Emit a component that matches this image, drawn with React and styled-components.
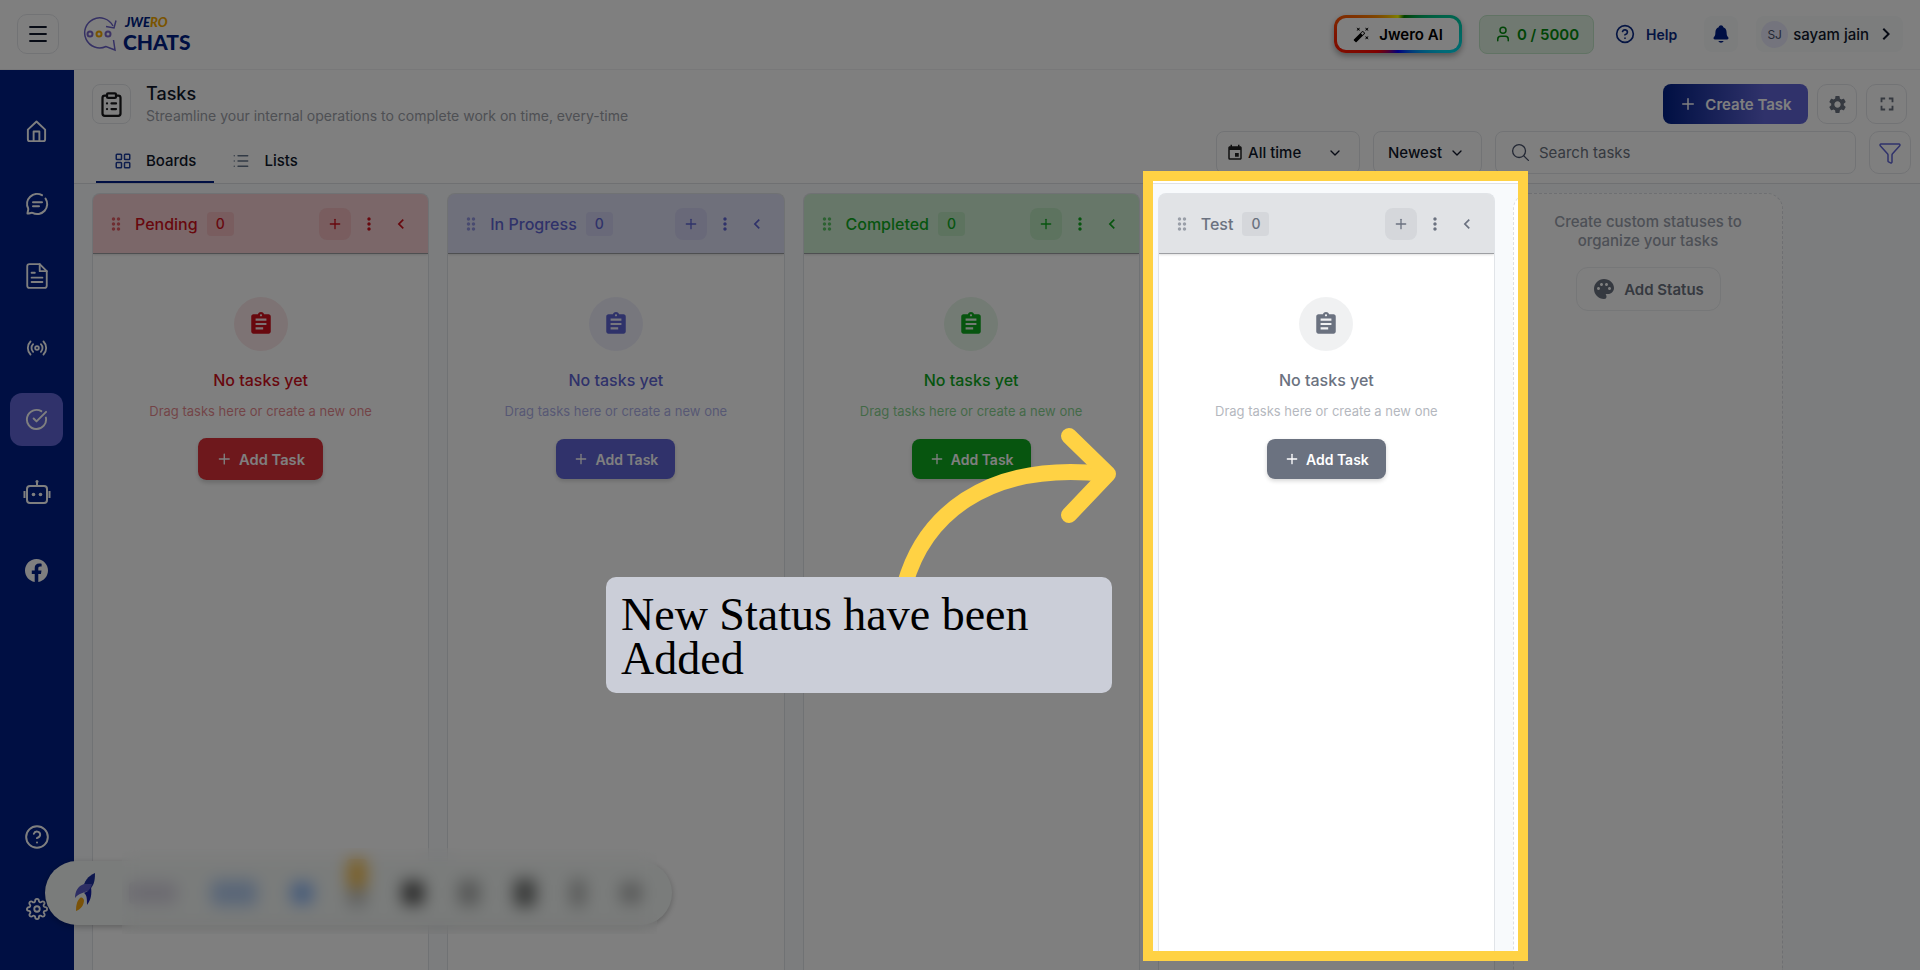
import React from "react";
import styled, { createGlobalStyle } from "styled-components";
import {
  Menu,
  Radio,
  CircleCheckBig,
  CircleHelp,
  ClipboardList,
  LayoutGrid,
  List,
  Plus,
  User,
  ChevronDown,
  Funnel,
} from "lucide-react";
import {
  MdAssignment,
  MdAutoFixHigh,
  MdChevronLeft,
  MdChevronRight,
  MdDragIndicator,
  MdEvent,
  MdFullscreen,
  MdMoreVert,
  MdPalette,
  MdSettings,
} from "react-icons/md";
import { IoNotifications, IoSearchOutline } from "react-icons/io5";
import { BsFacebook } from "react-icons/bs";
import { FiSettings } from "react-icons/fi";

const GlobalStyle = createGlobalStyle`
  * {
    box-sizing: border-box;
  }
  body {
    margin: 0;
    font-family: Inter, "Liberation Sans", sans-serif;
    color: #0f172a;
  }
  button, input, select {
    font-family: inherit;
    color: inherit;
    margin: 0;
  }
  button {
    cursor: pointer;
    padding: 0;
    border: none;
    background: none;
  }
  svg {
    flex-shrink: 0;
  }
`;

const Page = styled.div`
  position: relative;
  display: flex;
  flex-direction: column;
  height: 100vh;
  overflow: hidden;
  background: white;
`;

/* top bar */
const TopBar = styled.header`
  display: flex;
  align-items: center;
  justify-content: space-between;
  height: 70px;
  padding: 0 17px 1px;
  border-bottom: 1px solid #f0f0f2;
`;
const TopGroup = styled.div`
  display: flex;
  align-items: center;
  gap: ${(props) => props.$gap || 0}px;
`;
const IconBox = styled.button`
  display: flex;
  align-items: center;
  justify-content: center;
  width: ${(props) => props.$width || 40}px;
  height: ${(props) => props.$height || 40}px;
  border: 1px solid #e5e7eb;
  border-radius: 10px;
  color: ${(props) => props.$color || "#0f172a"};
`;
const Logo = styled.a`
  display: flex;
  align-items: center;
  gap: 6px;
  color: #001f86;
  text-decoration: none;
  font-family: Lato, sans-serif;
  font-weight: 900;
`;
const LogoText = styled.div`
  display: flex;
  flex-direction: column;
  gap: 2px;
`;
const LogoSmall = styled.span`
  display: flex;
  padding-left: 2px;
  font-size: 13px;
  line-height: 13px;
  font-style: italic;
  em {
    color: #f5a800;
  }
`;
const LogoBig = styled.span`
  font-size: 21px;
  line-height: 21px;
`;
const AiButton = styled.button`
  display: flex;
  align-items: center;
  justify-content: center;
  gap: 9px;
  width: 128px;
  height: 38px;
  margin-right: 17px;
  border: 3px solid transparent;
  border-radius: 12px;
  background: linear-gradient(white, white) padding-box,
    conic-gradient(#ff8c00, yellow 0deg, green 20deg, #00c896 70deg, #00d8f0 110deg, blue 180deg, red 230deg, #ff2a00 270deg, #ff7a00 300deg, yellow 360deg) border-box;
  box-shadow: 0 3px 6px rgba(0, 0, 0, 0.35);
  color: black;
  font-size: 15px;
  font-weight: 600;
`;
const Quota = styled.div`
  display: flex;
  align-items: center;
  justify-content: center;
  gap: 5px;
  width: 115px;
  height: 39px;
  margin-right: 21px;
  border: 1px solid #c3e6c8;
  border-radius: 8px;
  background: #e0f2e2;
  color: #008a0c;
  font-size: 15px;
  font-weight: 600;
`;
const HelpLink = styled.a`
  display: flex;
  align-items: center;
  gap: 11px;
  margin-right: 27px;
  color: #0b2a86;
  text-decoration: none;
  font-size: 14px;
  font-weight: 600;
`;
const SoftButton = styled.button`
  display: flex;
  align-items: center;
  justify-content: center;
  gap: 5px;
  height: 36px;
  padding: 0 ${(props) => props.$pad}px;
  border-radius: 8px;
  background: #f8fafb;
  font-size: 15px;
  font-weight: 500;
`;
const Avatar = styled.span`
  display: flex;
  align-items: center;
  justify-content: center;
  width: 27px;
  height: 27px;
  border-radius: 50%;
  background: #e8e8fb;
  color: #475069;
  font-size: 12px;
  font-weight: 400;
`;

/* side bar */
const Body = styled.div`
  display: flex;
  flex: 1;
  min-height: 0;
`;
const SideBar = styled.nav`
  display: flex;
  flex-direction: column;
  align-items: flex-start;
  width: 74px;
  padding: 35px 10px;
  background: #001f86;
`;
const SideGroup = styled.div`
  display: flex;
  flex-direction: column;
  gap: 19px;
  margin-bottom: ${(props) => (props.$last ? 0 : 26)}px;
  margin-top: ${(props) => (props.$last ? "auto" : 0)};
`;
const SideLink = styled.a`
  display: flex;
  align-items: center;
  justify-content: center;
  width: 53px;
  height: 53px;
  border-radius: 12px;
  color: white;
  background: ${(props) => (props.$active ? "#6065d6" : "transparent")};
`;

/* page head */
const Main = styled.main`
  display: flex;
  flex-direction: column;
  flex: 1;
  min-width: 0;
`;
const PageHead = styled.div`
  display: flex;
  justify-content: space-between;
  height: 114px;
  padding: 14px 9px 0 18px;
  border-bottom: 1px solid #dfe1e5;
`;
const HeadLeft = styled.div`
  display: flex;
  flex-direction: column;
  justify-content: space-between;
`;
const TitleRow = styled.div`
  display: flex;
  gap: 15px;
  h1 {
    margin: 0;
    font-size: 18px;
    line-height: 20px;
    font-weight: 500;
  }
  p {
    margin: 0;
    font-size: 14px;
    line-height: 24px;
    color: #9ca0a8;
  }
`;
const TitleIcon = styled.div`
  display: flex;
  align-items: center;
  justify-content: center;
  width: 39px;
  height: 40px;
  border: 1px solid #e5e7eb;
  border-radius: 8px;
  color: #18181b;
`;
const Tabs = styled.div`
  display: flex;
  padding-left: 4px;
`;
const Tab = styled.button`
  display: flex;
  align-items: center;
  gap: 14px;
  height: 43px;
  padding: 0 18px;
  border-bottom: 2px solid ${(props) => (props.$active ? "#001f86" : "transparent")};
  font-size: 15px;
  font-weight: 500;
  svg {
    color: ${(props) => (props.$active ? "#1c3c9c" : "#64748b")};
  }
`;
const HeadRight = styled.div`
  display: flex;
  flex-direction: column;
  gap: 7px;
`;
const Actions = styled.div`
  display: flex;
  justify-content: flex-end;
  gap: 9px;
  padding-right: 4px;
`;
const CreateButton = styled.button`
  display: flex;
  align-items: center;
  justify-content: center;
  gap: 8px;
  width: 145px;
  height: 40px;
  border-radius: 8px;
  background: linear-gradient(90deg, #001f86, #6065d6 70%);
  color: white;
  font-size: 15px;
  font-weight: 600;
`;
const Filters = styled.div`
  display: flex;
  gap: 13px;
`;
const Field = styled.label`
  display: flex;
  align-items: center;
  gap: ${(props) => props.$gap || 4}px;
  width: ${(props) => props.$width}px;
  height: 43px;
  padding: 0 ${(props) => props.$right || 16}px 0 ${(props) => props.$left || 14}px;
  border: 1px solid #e5e7eb;
  border-radius: 8px;
  font-size: 15px;
  select {
    flex: 1;
    min-width: 0;
    appearance: none;
    border: none;
    background: none;
    padding: 0;
    font-size: 15px;
    font-weight: 500;
  }
  input {
    flex: 1;
    min-width: 0;
    border: none;
    background: none;
    padding: 0;
    font-size: 15px;
  }
  input::placeholder {
    color: #6b7280;
    opacity: 1;
  }
`;

/* board */
const Board = styled.section`
  display: grid;
  grid-template-columns: repeat(4, 1fr) 270px;
  gap: 18px;
  flex: 1;
  min-height: 0;
  padding: 9px 137px 0 18px;
  background: #f8fafc;
`;
const Column = styled.article`
  display: flex;
  flex-direction: column;
  border: 1px solid #e1e4e8;
  border-bottom: none;
  border-radius: 8px 8px 0 0;
  overflow: hidden;
  background: white;
  color: ${(props) => props.$color};
`;
const ColumnHead = styled.div`
  display: flex;
  align-items: center;
  height: 60px;
  padding: 0 13px;
  border-bottom: 1px solid #9d9fa3;
  background: ${(props) => props.$color}33;
  box-shadow: 0 1px 2px rgba(0, 0, 0, 0.12);
  h2 {
    margin: 0 9px;
    font-size: 16px;
    font-weight: 500;
  }
`;
const Handle = styled.span`
  display: flex;
  opacity: 0.6;
`;
const Count = styled.span`
  width: 27px;
  height: 24px;
  border-radius: 4px;
  background: ${(props) => props.$color}1a;
  text-align: center;
  font-size: 14px;
  line-height: 24px;
  font-weight: 500;
`;
const HeadButtons = styled.div`
  display: flex;
  align-items: center;
  gap: 4px;
  margin-left: auto;
`;
const HeadButton = styled.button`
  display: flex;
  align-items: center;
  justify-content: center;
  width: ${(props) => (props.$tint ? 32 : 28)}px;
  height: 32px;
  border-radius: 8px;
  color: inherit;
  background: ${(props) => (props.$tint ? props.$tint + "1a" : "none")};
`;
const Empty = styled.div`
  display: flex;
  flex-direction: column;
  align-items: center;
  padding-top: 43px;
  h3 {
    margin: 18px 0 0;
    font-size: 16px;
    line-height: 22px;
    font-weight: 500;
  }
  p {
    margin: 10px 0 18px;
    font-size: 13px;
    line-height: 20px;
    opacity: 0.5;
  }
`;
const Circle = styled.div`
  display: flex;
  align-items: center;
  justify-content: center;
  width: 54px;
  height: 54px;
  border-radius: 50%;
  background: ${(props) => props.$color}1a;
`;
const AddTask = styled.button`
  display: flex;
  align-items: center;
  justify-content: center;
  gap: 6px;
  width: 119px;
  height: 40px;
  border-radius: 8px;
  background: ${(props) => props.$color};
  box-shadow: 0 2px 4px rgba(0, 0, 0, 0.16);
  color: white;
  font-size: 14px;
  font-weight: 600;
  transform: ${(props) => (props.$hovered ? "scale(1.05)" : "none")};
`;
const NewStatus = styled.aside`
  display: flex;
  flex-direction: column;
  align-items: center;
  padding-top: 18px;
  border: 1px dashed #dcdfe4;
  border-bottom: none;
  border-radius: 16px 16px 0 0;
  background: white;
  p {
    width: 200px;
    margin: 0 0 17px;
    text-align: center;
    font-size: 15px;
    line-height: 19px;
    font-weight: 500;
    color: #9aa0ac;
  }
`;
const AddStatus = styled.button`
  display: flex;
  align-items: center;
  justify-content: center;
  gap: 8px;
  width: 145px;
  height: 44px;
  border: 1px solid #eceef0;
  border-radius: 12px;
  color: #6b7280;
  font-size: 15px;
  font-weight: 600;
`;

/* floating dock, its tools are blurred out */
const Dock = styled.div`
  position: absolute;
  left: 45px;
  bottom: 45px;
  display: flex;
  align-items: center;
  width: 627px;
  height: 64px;
  padding-left: 22px;
  border-radius: 32px;
  background: #f5f9f7;
  box-shadow: 0 2px 6px rgba(0, 0, 0, 0.25);
`;
const Tools = styled.div`
  display: flex;
  align-items: center;
  justify-content: space-between;
  flex: 1;
  padding: 0 30px;
`;
const Tool = styled.span`
  width: ${(props) => props.$width || 22}px;
  height: ${(props) => props.$height || 22}px;
  margin-bottom: ${(props) => props.$raise || 0}px;
  border-radius: 4px;
  background: ${(props) => props.$color};
`;
const Haze = styled.div`
  position: absolute;
  left: 122px;
  bottom: 36px;
  width: 535px;
  height: 86px;
  backdrop-filter: blur(8px);
`;

/* walkthrough layer */
const Spotlight = styled.div`
  position: absolute;
  top: 171px;
  left: 1143px;
  bottom: 9px;
  width: 385px;
  border: 10px solid #ffd244;
  box-shadow: 0 0 0 2000px rgba(0, 0, 0, 0.5);
  pointer-events: none;
`;
const Arrow = styled.svg`
  position: absolute;
  top: 420px;
  left: 890px;
  pointer-events: none;
`;
const Note = styled.div`
  position: absolute;
  top: 577px;
  left: 606px;
  width: 506px;
  padding: 16px 15px 12px;
  border-radius: 10px;
  background: #cbced8;
  color: black;
  font-family: "Liberation Serif", serif;
  font-size: 46px;
  line-height: 44px;
`;

const Icon = ({ size = 24, width = 2, children }) => (
  <svg
    width={size}
    height={size}
    viewBox="0 0 24 24"
    fill="none"
    stroke="currentColor"
    strokeWidth={width}
    strokeLinecap="round"
    strokeLinejoin="round"
  >
    {children}
  </svg>
);
const HomeIcon = () => (
  <Icon size={23}>
    <path d="M3 10 12 1.500 21 10V20a2 2 0 0 1-2 2H5a2 2 0 0 1-2-2z" />
    <path d="M9 22V12h6v10" />
  </Icon>
);
const ChatIcon = () => (
  <Icon>
    <path d="M17 3.200A10 10 0 0 0 3.200 16.500C3.600 17.500 2.500 20 2.500 21.500 4 21.800 6 20.500 7.500 20.900A10 10 0 0 0 20.500 6.500" />
    <path d="M8 10.300h9M8 14.300h6" />
  </Icon>
);
const DocIcon = () => (
  <Icon size={26} width={1.7}>
    <path d="M14.500 1H5a2 2 0 0 0-2 2v18a2 2 0 0 0 2 2h14a2 2 0 0 0 2-2V7.500z" />
    <path d="M14.500 1v6.500H21M7 9h3M7 13.500h10M7 17.500h10" />
  </Icon>
);
const BotIcon = () => (
  <svg width="28" height="26" viewBox="0 0 28 26" fill="none" stroke="currentColor" strokeWidth="2">
    <rect x="4" y="7" width="20" height="17" rx="3" />
    <path d="M14 7V3M1.500 12v7M26.500 12v7" />
    <circle cx="14" cy="2.500" r="1.500" fill="currentColor" stroke="none" />
    <circle cx="10.500" cy="15.500" r="1.800" fill="currentColor" stroke="none" />
    <circle cx="17.500" cy="15.500" r="1.800" fill="currentColor" stroke="none" />
  </svg>
);
const LogoMark = () => (
  <svg width="34" height="36" viewBox="0 0 34 36" fill="none" strokeWidth="1.500" stroke="#6b62c8">
    <path d="M30 10A15 15 0 1 0 23 30.500L32 34 30.500 24" />
    <path d="M23 10.500 31 12 33 4.500" />
    <circle cx="7" cy="18" r="2.500" strokeWidth="2" stroke="#7b68c8" />
    <circle cx="16" cy="18" r="2.500" strokeWidth="2" stroke="#f5a800" />
    <circle cx="25" cy="18" r="2.500" strokeWidth="2" stroke="#7b68c8" />
  </svg>
);
const Rocket = () => (
  <svg width="32" height="42" viewBox="0 0 32 42">
    <path d="M28 1C21 4 17 9 16 17l5 2c6-5 7-10 7-18z" fill="#1c2f9c" />
    <path d="M17 12C11 14 8 19 8 26c4-5 9-5 15-8l2-6z" fill="#5a5cc8" />
    <path d="M24 15c-2 4-5 5-7 6 3 2 3 6 3 12 4-5 5-11 4-18z" fill="#1420a8" />
    <path d="M13 26c-3 3-4 7-4 13 5-2 8-6 8-11-1-2-2-3-4-2z" fill="#f5a510" />
  </svg>
);

const statuses = [
  { name: "Pending", color: "#d0101c", button: "#dc3039", hovered: true },
  { name: "In Progress", color: "#5f65d4", button: "#6065d6" },
  { name: "Completed", color: "#0eaa1e", button: "#0eaa1e" },
  { name: "Test", color: "#6b7280", button: "#6b7280" },
];

const tools = [
  { color: "#d9d6e2", width: 48 },
  { color: "#b4cdf0", width: 46, height: 26 },
  { color: "#8fb8f5" },
  { color: "linear-gradient(#f5c050 60%, #c4c6c5 60%)", width: 20, height: 48, raise: 20 },
  { color: "#5a5a5a", height: 24 },
  { color: "#b0b2b1", height: 26 },
  { color: "#757776", height: 28 },
  { color: "#b6b8b7", width: 16, height: 28 },
  { color: "#b6b8b7", height: 22 },
];

const StatusColumn = ({ name, color, button, hovered }) => (
  <Column $color={color}>
    <ColumnHead $color={color}>
      <Handle>
        <MdDragIndicator size={20} />
      </Handle>
      <h2>{name}</h2>
      <Count $color={color}>0</Count>
      <HeadButtons>
        <HeadButton $tint={color} aria-label={`Add task to ${name}`}>
          <Plus size={16} strokeWidth={2} />
        </HeadButton>
        <HeadButton aria-label={`${name} options`}>
          <MdMoreVert size={20} />
        </HeadButton>
        <HeadButton aria-label={`Collapse ${name}`}>
          <MdChevronLeft size={20} />
        </HeadButton>
      </HeadButtons>
    </ColumnHead>
    <Empty>
      <Circle $color={color}>
        <MdAssignment size={26} />
      </Circle>
      <h3>No tasks yet</h3>
      <p>Drag tasks here or create a new one</p>
      <AddTask $color={button} $hovered={hovered}>
        <Plus size={16} strokeWidth={2} />
        Add Task
      </AddTask>
    </Empty>
  </Column>
);

const App = () => {
  return (
    <Page>
      <GlobalStyle />
      <TopBar>
        <TopGroup $gap={24}>
          <IconBox $width={42} aria-label="Menu">
            <Menu size={24} strokeWidth={1.8} />
          </IconBox>
          <Logo href="#">
            <LogoMark />
            <LogoText>
              <LogoSmall>
                JWE<em>RO</em>
              </LogoSmall>
              <LogoBig>CHATS</LogoBig>
            </LogoText>
          </Logo>
        </TopGroup>
        <TopGroup>
          <AiButton>
            <MdAutoFixHigh size={17} />
            Jwero AI
          </AiButton>
          <Quota>
            <User size={18} />0 / 5000
          </Quota>
          <HelpLink href="#">
            <CircleHelp size={20} />
            Help
          </HelpLink>
          <TopGroup $gap={18}>
            <SoftButton $pad={7} aria-label="Notifications">
              <IoNotifications size={20} color="#001f86" />
            </SoftButton>
            <SoftButton $pad={5}>
              <Avatar>SJ</Avatar>
              sayam jain
              <MdChevronRight size={24} />
            </SoftButton>
          </TopGroup>
        </TopGroup>
      </TopBar>
      <Body>
        <SideBar>
          <SideGroup>
            <SideLink href="#" aria-label="Home">
              <HomeIcon />
            </SideLink>
            <SideLink href="#" aria-label="Chats">
              <ChatIcon />
            </SideLink>
            <SideLink href="#" aria-label="Documents">
              <DocIcon />
            </SideLink>
            <SideLink href="#" aria-label="Broadcast">
              <Radio size={22} />
            </SideLink>
            <SideLink href="#" $active aria-label="Tasks">
              <CircleCheckBig size={23} />
            </SideLink>
            <SideLink href="#" aria-label="Bots">
              <BotIcon />
            </SideLink>
          </SideGroup>
          <SideGroup>
            <SideLink href="#" aria-label="Facebook">
              <BsFacebook size={23} />
            </SideLink>
          </SideGroup>
          <SideGroup $last>
            <SideLink href="#" aria-label="Help">
              <CircleHelp size={26} strokeWidth={1.8} />
            </SideLink>
            <SideLink href="#" aria-label="Settings">
              <FiSettings size={22} />
            </SideLink>
          </SideGroup>
        </SideBar>
        <Main>
          <PageHead>
            <HeadLeft>
              <TitleRow>
                <TitleIcon>
                  <ClipboardList size={27} />
                </TitleIcon>
                <div>
                  <h1>Tasks</h1>
                  <p>Streamline your internal operations to complete work on time, every-time</p>
                </div>
              </TitleRow>
              <Tabs>
                <Tab $active>
                  <LayoutGrid size={18} />
                  Boards
                </Tab>
                <Tab>
                  <List size={18} strokeWidth={1.8} />
                  Lists
                </Tab>
              </Tabs>
            </HeadLeft>
            <HeadRight>
              <Actions>
                <CreateButton>
                  <Plus size={18} strokeWidth={2} />
                  Create Task
                </CreateButton>
                <IconBox $color="#6b7280" aria-label="Settings">
                  <MdSettings size={21} />
                </IconBox>
                <IconBox $width={41} $color="#6b7280" aria-label="Full screen">
                  <MdFullscreen size={22} />
                </IconBox>
              </Actions>
              <Filters>
                <Field $width={144} $left={9}>
                  <MdEvent size={18} color="#222" />
                  <select aria-label="Period">
                    <option>All time</option>
                  </select>
                  <ChevronDown size={16} />
                </Field>
                <Field $width={109}>
                  <select aria-label="Sort order">
                    <option>Newest</option>
                  </select>
                  <ChevronDown size={16} />
                </Field>
                <Field $width={361} $left={14} $gap={8}>
                  <IoSearchOutline size={21} color="#475069" />
                  <input type="text" placeholder="Search tasks" aria-label="Search tasks" />
                </Field>
                <IconBox $width={42} $height={43} $color="#6065d6" aria-label="Filter">
                  <Funnel size={24} strokeWidth={1.5} />
                </IconBox>
              </Filters>
            </HeadRight>
          </PageHead>
          <Board>
            {statuses.map((status) => (
              <StatusColumn key={status.name} {...status} />
            ))}
            <NewStatus>
              <p>Create custom statuses to organize your tasks</p>
              <AddStatus>
                <MdPalette size={24} />
                Add Status
              </AddStatus>
            </NewStatus>
          </Board>
        </Main>
      </Body>
      <Dock>
        <Rocket />
        <Tools>
          {tools.map((tool, i) => (
            <Tool key={i} $color={tool.color} $width={tool.width} $height={tool.height} $raise={tool.raise} />
          ))}
        </Tools>
      </Dock>
      <Haze />
      <Spotlight />
      <Arrow width="240" height="170" fill="none" stroke="#ffd244" strokeWidth="16" strokeLinecap="round" strokeLinejoin="round">
        <path d="M15 164C33 100 92 40 216 54" />
        <path d="M179 16 218 54 179 95" />
      </Arrow>
      <Note>New Status have been Added</Note>
    </Page>
  );
};
export default App;
